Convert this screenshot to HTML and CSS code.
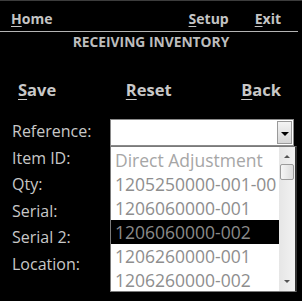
FILE: index.html
```html
<!DOCTYPE html>
<html>
<head>
<meta charset="utf-8">
<link rel="stylesheet" href="styles.css">
</head>
<body>
<div class="screen">
  <nav class="topbar">
    <a class="nav-link"><u>H</u>ome</a>
    <span class="spacer"></span>
    <a class="nav-link setup"><u>S</u>etup</a>
    <a class="nav-link exit"><u>E</u>xit</a>
  </nav>
  <div class="rule"></div>
  <h1 class="title">RECEIVING INVENTORY</h1>
  <div class="actions">
    <a class="action save"><u>S</u>ave</a>
    <a class="action reset"><u>R</u>eset</a>
    <a class="action back"><u>B</u>ack</a>
  </div>
  <div class="form">
    <div class="row">
      <span class="label">Reference:</span>
      <div class="combo">
        <div class="combo-field"></div>
        <div class="combo-btn"><span class="tri-down"></span></div>
        <div class="dropdown">
          <ul class="options">
            <li class="opt first">Direct Adjustment</li>
            <li class="opt">1205250000-001-00</li>
            <li class="opt">1206060000-001</li>
            <li class="opt selected">1206060000-002</li>
            <li class="opt">1206260000-001</li>
            <li class="opt">1206260000-002</li>
          </ul>
          <div class="scrollbar">
            <span class="sb-up"></span>
            <span class="sb-thumb"></span>
            <span class="sb-track"></span>
            <span class="sb-down"></span>
          </div>
        </div>
      </div>
    </div>
    <div class="row"><span class="label">Item ID:</span></div>
    <div class="row"><span class="label">Qty:</span></div>
    <div class="row"><span class="label">Serial:</span></div>
    <div class="row"><span class="label">Serial 2:</span></div>
    <div class="row"><span class="label">Location:</span></div>
  </div>
</div>
</body>
</html>
```
FILE: styles.css
```css
html, body {
  margin: 0;
  padding: 0;
  background: #000;
}
body {
  width: 302px;
  height: 301px;
  overflow: hidden;
  font-family: "Open Sans", "Noto Sans", sans-serif;
}
.screen {
  display: flex;
  flex-direction: column;
}
.topbar {
  border-top: 1px solid #3c3c3c;
  height: 31px;
  display: flex;
  align-items: center;
  padding: 0 0 0 11px;
  box-sizing: border-box;
}
.nav-link {
  color: #c4c4c4;
  font-weight: 700;
  font-size: 14px;
  line-height: 19px;
  padding-top: 4px;
}
.nav-link u {
  text-decoration-thickness: 1px;
  text-underline-offset: 2px;
}
.spacer { flex: 1; }
.setup { margin-right: 26px; }
.exit { margin-right: 21px; }
.rule {
  height: 1px;
  width: 298px;
  background: #b4b4b4;
}
.title {
  margin: 0;
  text-align: center;
  color: #bdbdbd;
  font-size: 13.8px;
  font-weight: 700;
  line-height: 18px;
  padding-top: 1px;
}
.actions {
  display: flex;
  justify-content: space-between;
  padding: 28px 21px 0 18px;
}
.action {
  color: #c8c8c8;
  font-weight: 700;
  font-size: 16.5px;
  line-height: 22px;
}
.action u {
  text-decoration-thickness: 1px;
  text-underline-offset: 3px;
}
.form {
  padding: 19px 0 0 12px;
  display: flex;
  flex-direction: column;
}
.row {
  height: 26.6px;
  display: flex;
  align-items: flex-start;
}
.label {
  color: #c8c8c8;
  font-size: 16px;
  line-height: 22px;
  width: 98px;
}
.combo {
  position: relative;
  width: 184px;
  height: 27px;
  margin-top: -1px;
  background: #fff;
  border: 1px solid #8a8a8a;
  box-sizing: border-box;
  display: flex;
  justify-content: flex-end;
}
.combo-field { flex: 1; }
.combo-btn {
  width: 15px;
  height: 23px;
  margin: 1px 1px 0 0;
  background: linear-gradient(#f4f4f4, #d6d6d6);
  border: 1px solid #9a9a9a;
  box-sizing: border-box;
  display: flex;
  align-items: center;
  justify-content: center;
}
.tri-down {
  width: 0;
  height: 0;
  border-left: 4px solid transparent;
  border-right: 4px solid transparent;
  border-top: 4px solid #000;
  margin-top: 2px;
}
.dropdown {
  position: absolute;
  top: 26px;
  left: -1px;
  width: 187px;
  height: 146px;
  background: #fff;
  border: 1px solid #7a7a7a;
  border-right: 2px solid #333;
  box-sizing: border-box;
  display: flex;
}
.options {
  list-style: none;
  margin: 0;
  padding: 1px 0 0 0;
  flex: 1;
}
.opt {
  height: 24px;
  line-height: 24px;
  font-size: 17.5px;
  color: #8e8e8e;
  padding-left: 4px;
  white-space: nowrap;
  overflow: hidden;
}
.opt.first {
  color: #a6a6a6;
}
.opt.selected {
  background: #000;
  color: #8a8a8a;
}
.scrollbar {
  width: 16px;
  background: linear-gradient(90deg, #e6e6e6, #f2f2f2);
  display: flex;
  flex-direction: column;
  align-items: center;
}
.sb-up {
  margin-top: 8px;
  width: 0;
  height: 0;
  border-left: 3px solid transparent;
  border-right: 3px solid transparent;
  border-bottom: 3px solid #555;
}
.sb-thumb {
  margin-top: 6px;
  width: 14px;
  height: 16px;
  background: linear-gradient(90deg, #f6f6f6, #dcdcdc);
  border: 1px solid #9c9c9c;
  border-radius: 2px;
  box-sizing: border-box;
}
.sb-track { flex: 1; }
.sb-down {
  margin-bottom: 8px;
  width: 0;
  height: 0;
  border-left: 3px solid transparent;
  border-right: 3px solid transparent;
  border-top: 3px solid #555;
}
```
